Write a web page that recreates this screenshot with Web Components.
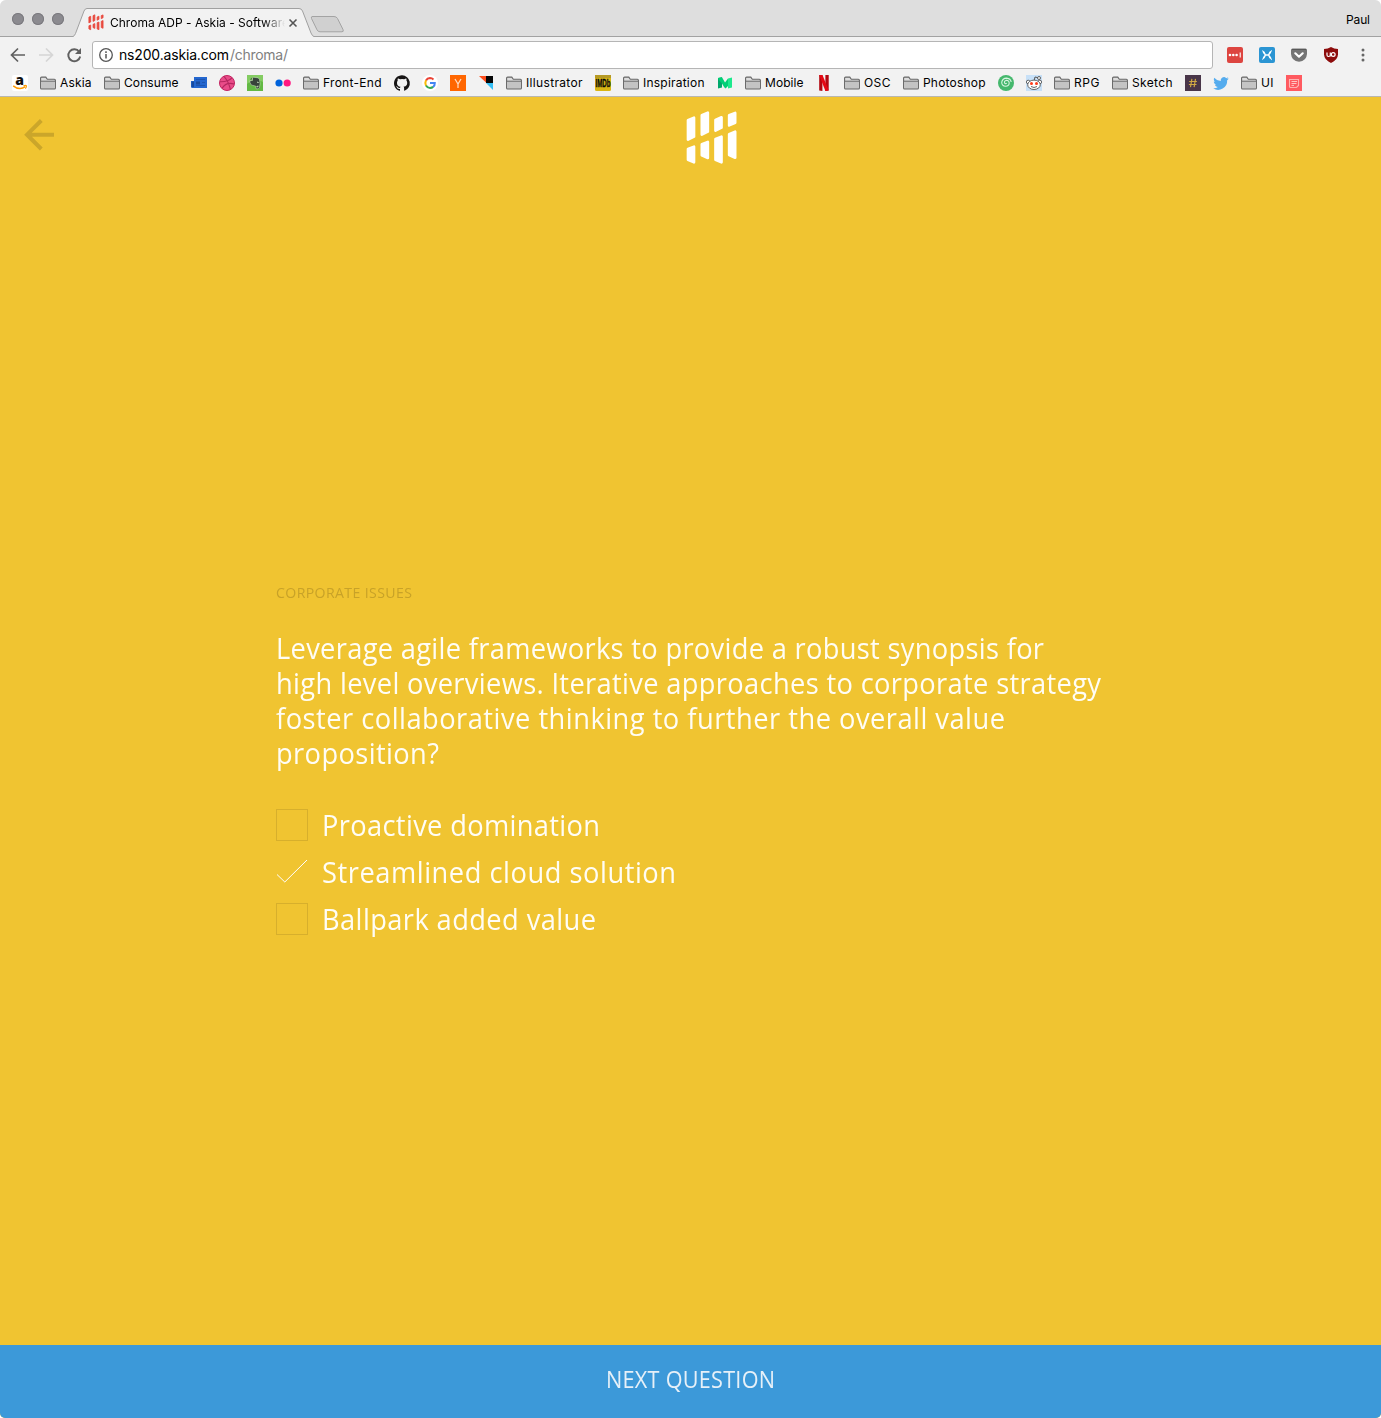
<!DOCTYPE html>
<html lang="en">
<head>
<meta charset="utf-8">
<title>Chroma ADP - Askia - Software</title>
<style>
html,body{margin:0;height:100%;background:#fff}
body{font-family:Inter,"Liberation Sans",sans-serif;overflow:hidden}
</style>
</head>
<body>
<browser-window>
  <title-bar slot="chrome"><fit-text slot="title" w="179">Chroma ADP - Askia - Software</fit-text><fit-text slot="user" w="24">Paul</fit-text></title-bar>
  <nav-bar slot="chrome"><fit-text slot="host" w="110">ns200.askia.com</fit-text><fit-text slot="path" w="58">/chroma/</fit-text></nav-bar>
  <bookmark-bar slot="chrome">
    <book-mark icon="amazon"></book-mark>
    <book-mark icon="folder" w="32">Askia</book-mark>
    <book-mark icon="folder" w="55">Consume</book-mark>
    <book-mark icon="news"></book-mark>
    <book-mark icon="dribbble"></book-mark>
    <book-mark icon="evernote"></book-mark>
    <book-mark icon="flickr"></book-mark>
    <book-mark icon="folder" w="59">Front-End</book-mark>
    <book-mark icon="github"></book-mark>
    <book-mark icon="google"></book-mark>
    <book-mark icon="hn"></book-mark>
    <book-mark icon="corner"></book-mark>
    <book-mark icon="folder" w="57">Illustrator</book-mark>
    <book-mark icon="imdb"></book-mark>
    <book-mark icon="folder" w="62">Inspiration</book-mark>
    <book-mark icon="medium"></book-mark>
    <book-mark icon="folder" w="39">Mobile</book-mark>
    <book-mark icon="netflix"></book-mark>
    <book-mark icon="folder" w="27">OSC</book-mark>
    <book-mark icon="folder" w="63">Photoshop</book-mark>
    <book-mark icon="swirl"></book-mark>
    <book-mark icon="reddit"></book-mark>
    <book-mark icon="folder" w="26">RPG</book-mark>
    <book-mark icon="folder" w="41">Sketch</book-mark>
    <book-mark icon="hash"></book-mark>
    <book-mark icon="twitter"></book-mark>
    <book-mark icon="folder" w="13">UI</book-mark>
    <book-mark icon="note"></book-mark>
  </bookmark-bar>
  <survey-page>
    <fit-text slot="section" w="136">CORPORATE ISSUES</fit-text>
    <fit-text slot="question" w="768">Leverage agile frameworks to provide a robust synopsis for</fit-text>
    <fit-text slot="question" w="825">high level overviews. Iterative approaches to corporate strategy</fit-text>
    <fit-text slot="question" w="729">foster collaborative thinking to further the overall value</fit-text>
    <fit-text slot="question" w="163">proposition?</fit-text>
    <survey-option w="278">Proactive domination</survey-option>
    <survey-option w="354" checked>Streamlined cloud solution</survey-option>
    <survey-option w="274">Ballpark added value</survey-option>
    <fit-text slot="next" w="169">NEXT QUESTION</fit-text>
  </survey-page>
</browser-window>
<script>
// Slanted-bar logo, [x, top-left y, top-right y, bottom-left y, bottom-right y]
const bars = [[50,56,48,124,115],[50,142,135,184,192],[91.5,41,33,109,100],[91.5,128,121,171,179],
  [132.5,55,47,97,88],[132.5,112,105,184,192],[173.5,41,34,81,73],[173.5,98,90,170,178]];
const logo = c => `<g fill="${c}" stroke="${c}" stroke-width="8" stroke-linejoin="round">` + bars.map(([x,a,b,d,e]) =>
  `<path d="M${x+4} ${a+5}L${x+22} ${b+5}V${e-5}L${x+4} ${d-5}Z"/>`).join('') + '</g>';
const svg = (w, h, body, vb) => `<svg width="${w}" height="${h}" viewBox="${vb || `0 0 ${w} ${h}`}" fill="none">${body}</svg>`;

const icons = {
  folder:'<path d="M.6 12.9V3.1Q.6 2.1 1.6 2.1H5.8L7.3 4.2H14.4Q15.4 4.2 15.4 5.2V12.9Q15.4 13.9 14.4 13.9H1.6Q.6 13.9.6 12.9Z" fill="#ddd" stroke="#666" stroke-width="1.1"/><path d="M1.2 6.4H14.8V13.3H1.2Z" fill="#c4c4c4"/><path d="M1 6.2H15" stroke="#666"/>',
  amazon:'<rect width="16" height="16" rx="2" fill="#fff"/><text x="3.3" y="9.8" font-family="Open Sans" font-weight="800" font-size="14" fill="#111">a</text><path d="M1.2 10.8Q7.5 15.8 13.4 11.7" stroke="#f90" stroke-width="1.5"/><path d="M11.4 10.7Q14.7 10 14.5 11Q14.3 12.8 13.3 13.7" stroke="#f90" stroke-width="1.1"/>',
  news:'<path d="M3 2H16V13H1.2Q0 13 0 11.5V6H3Z" fill="#2467cf"/><path d="M.6 6.5H3V12H.6Z" fill="#174a9e"/><path d="M5 4.5H14M11 7.500H14M5 10.500H14" stroke="#1d55b0"/><path d="M5 6.5H9V9.5H5Z" fill="#1b4d9f"/>',
  dribbble:'<circle cx="8" cy="8" r="7.5" fill="#e94c89" stroke="#c32361"/><path d="M1 6.7Q9 7 13.2 2.6M5 1.3Q10 7 11.4 14.7M3 13.4Q7 6.6 15.2 9" stroke="#b52760" stroke-width="1.1"/>',
  evernote:'<rect width="16" height="16" fill="#63b944"/><path d="M0 0H16V7Q8 2 0 9Z" fill="#9bd976" opacity=".6"/><path d="M3 5.5H5.5V3Q6 2 8 2.4Q12 2.2 12.5 4.5Q13.6 9 12.4 12.7Q11.6 14.2 9.2 13.8Q8.5 12.8 9.4 11.5L7.5 10.8Q3.5 11 3 7.5Z" fill="#37433b" stroke="#d6f0c8" stroke-width=".5"/><path d="M3 4.6L4.8 2.7V4.6Z" fill="#37433b"/><path d="M10 7.4Q11.2 6.7 11.7 7.7M11.5 11.2H10.4V12.3" stroke="#d6f0c8" stroke-width=".9"/>',
  flickr:'<circle cx="4" cy="8" r="3.6" fill="#0063dc"/><circle cx="12.2" cy="8" r="3.6" fill="#ff1981"/>',
  github:'<path fill="#171515" d="M8 .2C3.6.2 0 3.8 0 8.2c0 3.5 2.3 6.5 5.5 7.6.4.1.5-.2.5-.4v-1.5c-2.2.5-2.7-.9-2.7-.9-.4-.9-.9-1.2-.9-1.2-.7-.5.1-.5.1-.5.8.1 1.2.8 1.2.8.7 1.3 1.9.9 2.4.7 0-.5.3-.9.5-1.1-1.8-.2-3.6-.9-3.6-4 0-.9.3-1.6.8-2.1-.1-.2-.4-1 .1-2.1 0 0 .7-.2 2.2.8a7.5 7.5 0 0 1 4 0c1.5-1 2.2-.8 2.2-.8.4 1.1.2 1.9.1 2.1.5.6.8 1.3.8 2.1 0 3.1-1.9 3.7-3.7 3.9.3.3.6.8.6 1.5v2.2c0 .2.1.5.5.4A8 8 0 0 0 8 .2Z"/>',
  google:'<circle cx="8" cy="8" r="8" fill="#fff"/><g stroke-width="2"><path d="M4 5.5Q5.2 3.2 8 3.1Q10 3.1 11.5 4.4" stroke="#ea4335"/><path d="M4 5.3Q2.7 8 4 10.7" stroke="#fbbc05"/><path d="M4 10.5Q5.4 12.9 8 12.9Q9.9 12.9 11.2 11.9" stroke="#34a853"/><path d="M8 8H12.8Q12.9 10.6 11.1 12" stroke="#4285f4"/></g>',
  hn:'<rect width="16" height="16" fill="#ff6600"/><path d="M5 4L8 9L11 4M8 9V13" stroke="#ffd9bd" stroke-width="1.3"/>',
  corner:'<path d="M1 1H8.5V8Z" fill="#ff4f1e"/><path d="M8 1H15V8H8Z" fill="#050505"/><path d="M8 8H15V15Z" fill="#35bff5"/>',
  imdb:'<rect width="16" height="16" rx="1.5" fill="#d9b514"/><path d="M0 0H16V3H0Z" fill="#b69a25"/><text x=".5" y="12.300" font-family="Liberation Sans" font-weight="700" font-size="11" textLength="15" lengthAdjust="spacingAndGlyphs" fill="#080808" stroke="#080808" stroke-width=".3">IMDb</text>',
  medium:'<path d="M1 3L5 2.200V12.600L1 13.400Z" fill="#00a86b"/><path d="M11 3.600L15 2.500V12.500L11 13.600Z" fill="#1de98d"/><path d="M1 3L5 2.200L8 7.500L11 3.600V11L8.500 13.500Q7 12.500 5 8.500L1 4Z" fill="#00cf76"/>',
  netflix:'<path d="M3.2 0H6.4V16L3.2 15.6ZM9.4 0H12.7V15.6L9.4 16Z" fill="#b20710"/><path d="M3.2 0H6.5L12.7 15.6L9.4 16Z" fill="#e50914"/>',
  swirl:'<circle cx="8" cy="8" r="8" fill="#45b86d"/><path d="M8.7 8.2Q7.7 9.3 6.7 8.2Q5.8 6.2 8 5.4Q11 5 11.2 8Q11 11.3 7.7 11.3Q3.7 11 3.7 7.3Q4.3 3.2 8.6 3.1Q12.7 3.6 13.2 7" stroke="#d9f5e1" stroke-width="1.100"/>',
  reddit:'<rect width="16" height="16" fill="#c7e0f7"/><path d="M8 6L9 2L12.5 2.8" stroke="#555"/><g fill="#fff" stroke="#555" stroke-width=".9"><circle cx="13" cy="3" r="1.5"/><circle cx="2.2" cy="7" r="1.8"/><circle cx="13.8" cy="7" r="1.8"/><ellipse cx="8" cy="9.8" rx="6.3" ry="4.7"/></g><circle cx="5.5" cy="8.5" r="1.5" fill="#ff3b1a"/><circle cx="10.5" cy="8.5" r="1.5" fill="#ff3b1a"/><path d="M5 11.5Q8 13.5 11 11.5" stroke="#555" stroke-width=".9"/>',
  hash:'<rect width="16" height="16" fill="#493649"/><path d="M6.9 3.800L5.500 12.200M10.500 3.800L9.100 12.200M4.200 6.500H11.900M3.900 9.500H11.500" stroke="#d0a944" stroke-width="1.150"/>',
  twitter:'<path fill="#55acee" transform="translate(.2 .7) scale(.97)" d="M16 3c-.6.3-1.2.4-1.9.5.7-.4 1.2-1 1.4-1.8-.6.4-1.3.6-2.1.8A3.3 3.3 0 0 0 7.8 5.5 9.3 9.3 0 0 1 1.1 2.1C.2 3.7.7 5.500 2.100 6.500c-.5 0-1-.2-1.500-.4 0 1.600 1.100 2.900 2.600 3.200-.5.1-1 .1-1.500.1.4 1.300 1.600 2.200 3.100 2.300A6.600 6.600 0 0 1 0 13a9.300 9.300 0 0 0 14.400-8.300c.6-.5 1.200-1 1.600-1.700Z"/>',
  note:'<rect width="16" height="16" fill="#ff5a60"/><path d="M3.500 4.500V11.500Q3.500 12.500 4.500 12.500H10.500L12.500 10.500V4.500Z" stroke="#ffb2b0" stroke-width="1.100"/><path d="M5.500 6.500H11M5.500 8.500H10.500M5.500 10.400H8" stroke="#ffc6c3" stroke-width="1"/>',
  dots:'<rect width="16" height="16" rx="2" fill="#dd4540"/><circle cx="3" cy="8" r="1.300" fill="#fff"/><circle cx="6.300" cy="8" r="1.300" fill="#fff"/><circle cx="9.600" cy="8" r="1.300" fill="#fff"/><path d="M13.200 5.500V10.500" stroke="#fff" stroke-width="1.100"/>',
  cross:'<rect width="16" height="16" rx="2" fill="#2b95d3"/><path d="M3 3Q6.200 4.300 6.800 7.300H9.200Q9.800 4.300 13 3Q12.300 6.300 10.300 8Q12.300 9.800 13 13.200Q9.800 11.800 9.200 8.800H6.800Q6.200 11.800 3 13.200Q3.700 9.800 5.700 8Q3.700 6.300 3 3Z" fill="#fff"/>',
  pocket:'<path d="M1.500 1.500H14.500Q16 1.500 16 3V7Q15.500 14 8 14.800Q.5 14 0 7V3Q0 1.500 1.500 1.500Z" fill="#757575"/><path d="M1 2.500H15" stroke="#595959"/><path d="M4.300 6.300L8 9.700L11.700 6.300" stroke="#fff" stroke-width="2.200" stroke-linecap="round" stroke-linejoin="round"/>',
  shield:'<path d="M8 0Q11 1.900 15 2V7.500Q14.700 13 8 16Q1.300 13 1 7.500V2Q5 1.900 8 0Z" fill="#8d0d0d"/><path d="M4 5.500V8Q4 9.500 5.500 9.500Q7.300 9.500 7.300 8V5.500M7.300 9.500V8" stroke="#fff" stroke-width="1.200"/><circle cx="10.200" cy="7.500" r="1.900" stroke="#fff" stroke-width="1.200"/>',
  menu:'<g fill="#666"><circle cx="8" cy="3" r="1.500"/><circle cx="8" cy="8" r="1.500"/><circle cx="8" cy="13" r="1.500"/></g>'
};
const icon = n => svg(16, 16, icons[n]);

class Base extends HTMLElement {
  connectedCallback() {
    if (this.shadowRoot) return;
    this.attachShadow({mode:'open'}).innerHTML = `<style>svg{display:block;flex:none;overflow:visible}</style>` + this.view();
    this.ready?.();
  }
}

// Single line of text whose tracking is adjusted to fill the width in "w".
// --condense narrows the letterforms themselves.
class FitText extends Base {
  view() { return `<style>:host{display:block;white-space:pre;flex:none}span{display:inline-block;transform-origin:0 50%;transform:scaleX(var(--condense,1))}</style><span><slot></slot></span>`; }
  ready() {
    const w = +this.getAttribute('w'), s = this.shadowRoot.querySelector('span');
    this.style.width = w + 'px';
    requestAnimationFrame(() => {
      const k = parseFloat(getComputedStyle(this).getPropertyValue('--condense')) || 1;
      s.style.letterSpacing = '0px';
      const n = this.textContent.length;
      s.style.letterSpacing = (w - s.getBoundingClientRect().width) / k / (n - 1) + 'px';
    });
  }
}

class BrowserWindow extends Base {
  view() { return `<style>:host{display:flex;flex-direction:column;height:1418px;width:1381px;border-radius:6px 6px 5px 5px;overflow:hidden;background:#f2f2f2}
    .page{flex:1;display:flex;border-top:1px solid #b9b7b0}</style>
    <slot name="chrome"></slot><div class="page"><slot></slot></div>`; }
}

class TitleBar extends Base {
  view() { return `<style>
    :host{display:flex;height:37px;background:linear-gradient(#dedede 36px,#a2a2a2 36px);font-size:12px;color:#000}
    .lights{display:flex;gap:8px;padding:13px 0 0 12px;width:61px}
    i{width:12px;height:12px;border-radius:50%;background:#8b8a8f;box-shadow:inset 0 0 0 1px #7b7a7f}
    .tab{display:grid;width:241px}
    .tab>*{grid-area:1/1}
    .row{display:flex;padding:8px 0 0 15px;height:29px;align-items:center}
    .clip{width:175px;margin:0 3px 0 6px;overflow:hidden;-webkit-mask:linear-gradient(90deg,#000 88%,transparent);mask:linear-gradient(90deg,#000 88%,transparent)}
    .new{margin:15px 0 0 -5px}
    .user{margin-left:auto;padding:12px 11px 0 0;line-height:16px}
    </style>
    <div class="lights"><i></i><i></i><i></i></div>
    <div class="tab">${svg(241,37,'<path d="M0 36.500Q1.500 36 2.500 33.500L11 11Q12 8.500 14 8.500H226Q228.500 8.500 229.500 11L238 33Q239.500 36.500 241 36.500V37H0Z" fill="#f2f2f2"/><path d="M0 36.500Q1.500 36 2.500 33.500L11 11Q12 8.500 14 8.500H226Q228.500 8.500 229.500 11L238 33Q239.500 36.500 241 36.500" stroke="#a0a0a0"/>')}
      <div class="row">${svg(16,16.5,logo('#e8493d'),'48 30 154 165')}<div class="clip"><slot name="title"></slot></div>${svg(10,10,'<path d="M1.500 1.500L8.500 8.500M8.500 1.500L1.500 8.500" stroke="#555" stroke-width="1.600"/>')}</div></div>
    <div class="new">${svg(37,18,'<path d="M3 1.500H25Q27.500 1.500 28.500 3.500L34 14.500Q35 16.800 33 16.800H11Q9 16.800 8 14.800L2.500 3.500Q2 1.500 3 1.500Z" fill="#d0d0d0" stroke="#a3a3a3"/>')}</div>
    <div class="user"><slot name="user"></slot></div>`; }
}

class NavBar extends Base {
  view() { return `<style>
    :host{display:flex;height:28px;padding:4px 10px 0 10px;align-items:center}
    .nav{display:flex;gap:12px;width:82px}
    .field{box-sizing:border-box;display:flex;align-items:center;width:1121px;height:28px;border:1px solid #b5b5b5;border-radius:3px;background:#fff;padding-left:5px;font-size:14px;line-height:18px;color:#000}
    .field svg{margin-right:5px}
    .path{color:#808080;margin-left:1px}
    .ext{display:flex;gap:16px;margin-left:14px}
    </style>
    <div class="nav">${svg(16,16,'<path d="M15 8H2M8 1.500L1.500 8L8 14.500" stroke="#606060" stroke-width="1.700"/>')}
    ${svg(16,16,'<path d="M1 8H14M8 1.500L14.500 8L8 14.500" stroke="#d5d5d5" stroke-width="1.700"/>')}
    ${svg(16,16,'<path d="M13.200 4.700A6 6 0 1 0 14.200 9.500" stroke="#606060" stroke-width="1.900"/><path d="M15 1V7H9Z" fill="#606060"/>')}</div>
    <div class="field">${svg(16,16,'<circle cx="8" cy="8" r="6.300" stroke="#555" stroke-width="1.300"/><path d="M8 7V11.500M8 4.300V5.900" stroke="#555" stroke-width="1.500"/>')}<slot name="host"></slot><div class="path"><slot name="path"></slot></div></div>
    <div class="ext">${['dots','cross','pocket','shield','menu'].map(icon).join('')}</div>`; }
}

class BookmarkBar extends Base {
  view() { return `<style>:host{display:flex;gap:12px;height:27px;padding:0 12px;align-items:center}</style><slot></slot>`; }
}
class BookMark extends Base {
  view() {
    const w = +this.getAttribute('w');
    return `<style>:host{display:flex;gap:4px;align-items:center;flex:none;font-size:12px;line-height:16px;color:#000}.t{width:${w}px}</style>
      ${icon(this.getAttribute('icon'))}${w ? `<div class="t"><fit-text w="${w - .5}">${this.textContent}</fit-text></div>` : ''}`;
  }
}

class SurveyPage extends Base {
  view() { return `<style>
    :host{display:flex;flex-direction:column;flex:1;background:#f0c431;color:#fffdf5;font-family:"Open Sans","Noto Sans",sans-serif;--condense:.94}
    header{display:flex;height:486px;box-sizing:border-box;padding:13px 0 0 24px}
    .back{padding-top:8px;width:661px}
    main{flex:1;padding-left:276px}
    .section{font-size:15px;line-height:18px;color:#c8a228}
    .question{margin-top:29px;font-size:29px;line-height:35px}
    .options{display:flex;flex-direction:column;gap:11px;margin-top:37px}
    footer{display:flex;height:73px;align-items:center;justify-content:center;background:#3c99d9;color:#e6f0f8;font-size:23px;line-height:33px}
    footer div{padding-bottom:4px}
    </style>
    <header><div class="back">${svg(31,34,'<path d="M30 16.700H3M17.300 2.500L3 16.700L17.300 31" stroke="#cba62a" stroke-width="4"/>')}</div>${svg(53.33,55,logo('#fff'),'45 30 160 165')}</header>
    <main><div class="section"><slot name="section"></slot></div><div class="question"><slot name="question"></slot></div><div class="options"><slot></slot></div></main>
    <footer><div><slot name="next"></slot></div></footer>`; }
}
class SurveyOption extends Base {
  view() {
    return `<style>:host{display:flex;height:36px;align-items:center;gap:14px;font-size:29px;line-height:36px}</style>
      ${svg(32,32,this.hasAttribute('checked') ? '<path d="M1 18.500L8.800 26L31 4" stroke="#fff" stroke-width="1"/>' : '<rect x=".5" y=".5" width="31" height="31" stroke="#d7af2c"/>')}
      <fit-text w="${this.getAttribute('w')}">${this.textContent}</fit-text>`;
  }
}
customElements.define('fit-text', FitText);
customElements.define('browser-window', BrowserWindow);
customElements.define('title-bar', TitleBar);
customElements.define('nav-bar', NavBar);
customElements.define('book-mark', BookMark);
customElements.define('bookmark-bar', BookmarkBar);
customElements.define('survey-option', SurveyOption);
customElements.define('survey-page', SurveyPage);
</script>
</body>
</html>
